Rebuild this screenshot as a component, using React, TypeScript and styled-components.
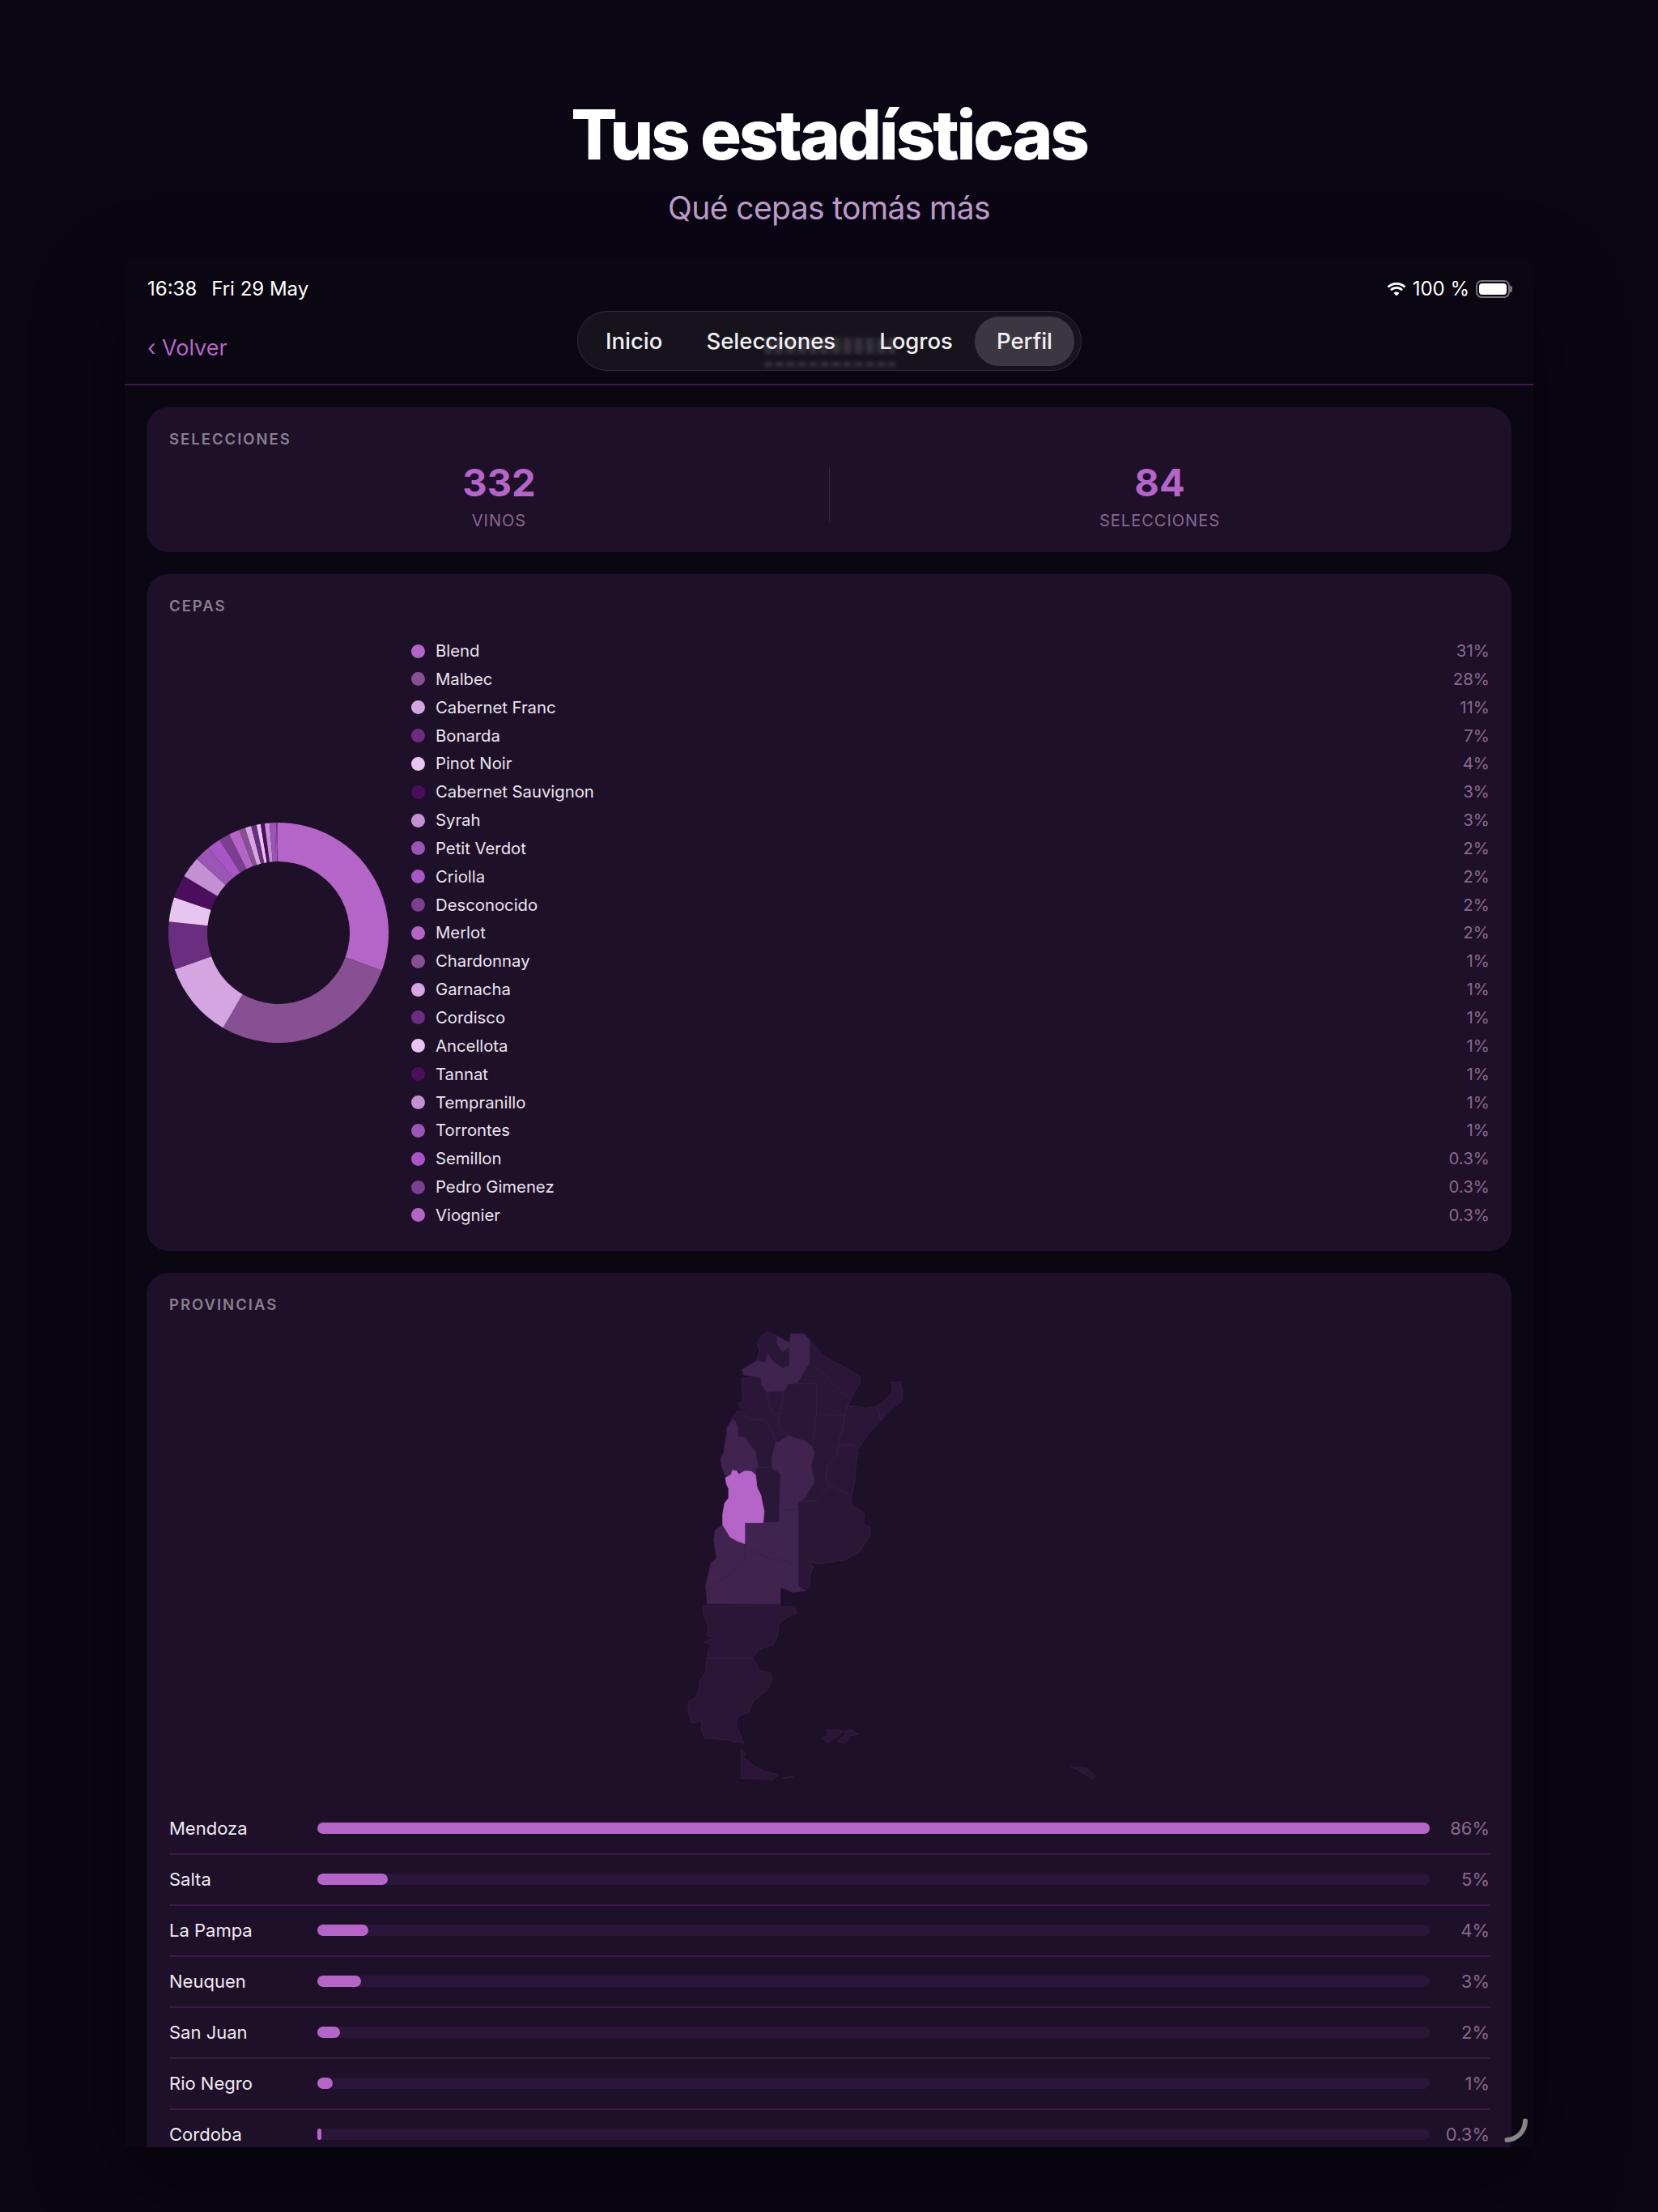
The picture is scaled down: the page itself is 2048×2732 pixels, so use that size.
import React from 'react';
import styled, { createGlobalStyle } from 'styled-components';

const ACCENT = '#b565c7';
const MAP_DARK = '#2a1637';
const MAP_LIGHT = '#40234f';

const GlobalStyle = createGlobalStyle`
  html, body {
    margin: 0;
    padding: 0;
    background: #0a0613;
    font-family: Inter, "Noto Sans", sans-serif;
  }
`;

const cepas = [
  { name: 'Blend', pct: '31%', share: 30.6, color: '#b565c7' },
  { name: 'Malbec', pct: '28%', share: 27.8, color: '#875092' },
  { name: 'Cabernet Franc', pct: '11%', share: 11.2, color: '#d4a5e0' },
  { name: 'Bonarda', pct: '7%', share: 7.0, color: '#6a2d80' },
  { name: 'Pinot Noir', pct: '4%', share: 3.6, color: '#e8c4f0' },
  { name: 'Cabernet Sauvignon', pct: '3%', share: 3.4, color: '#4a0e5c' },
  { name: 'Syrah', pct: '3%', share: 3.1, color: '#c490d4' },
  { name: 'Petit Verdot', pct: '2%', share: 2.3, color: '#9a55b5' },
  { name: 'Criolla', pct: '2%', share: 2.0, color: '#a855c7' },
  { name: 'Desconocido', pct: '2%', share: 1.6, color: '#7a3f8f' },
  { name: 'Merlot', pct: '2%', share: 1.6, color: '#b565c7' },
  { name: 'Chardonnay', pct: '1%', share: 0.9, color: '#875092' },
  { name: 'Garnacha', pct: '1%', share: 0.9, color: '#d4a5e0' },
  { name: 'Cordisco', pct: '1%', share: 0.8, color: '#6a2d80' },
  { name: 'Ancellota', pct: '1%', share: 0.6, color: '#e8c4f0' },
  { name: 'Tannat', pct: '1%', share: 0.6, color: '#4a0e5c' },
  { name: 'Tempranillo', pct: '1%', share: 0.7, color: '#c490d4' },
  { name: 'Torrontes', pct: '1%', share: 0.8, color: '#9a55b5' },
  { name: 'Semillon', pct: '0.3%', share: 0.2, color: '#a855c7' },
  { name: 'Pedro Gimenez', pct: '0.3%', share: 0.15, color: '#7a3f8f' },
  { name: 'Viognier', pct: '0.3%', share: 0.15, color: '#b565c7' },
];

const provincias = [
  { name: 'Mendoza', pct: '86%', fill: 100 },
  { name: 'Salta', pct: '5%', fill: 6.3 },
  { name: 'La Pampa', pct: '4%', fill: 4.55 },
  { name: 'Neuquen', pct: '3%', fill: 3.9 },
  { name: 'San Juan', pct: '2%', fill: 2.05 },
  { name: 'Rio Negro', pct: '1%', fill: 1.4 },
  { name: 'Cordoba', pct: '0.3%', fill: 0.35 },
];

// outlines traced from the reference, 3 units = 1px
const regions: { points: string; fill: string; stroke?: string }[] = [
  { fill: MAP_DARK, points: '385,42 420,60 420,90 440,120 465,100 465,170 440,180 405,155 385,125 375,160 345,150 355,110 345,90 360,60' },
  { fill: MAP_LIGHT, points: '420,60 465,85 470,52 520,52 540,75 540,165 495,235 460,240 445,265 415,265 380,268 360,240 360,215 295,205 290,185 345,150 375,160 385,125 405,155 440,180 465,170 465,100 440,120 420,90' },
  { fill: MAP_DARK, points: '540,75 590,130 630,155 670,175 725,210 730,230 710,260 695,295 640,250 600,205 540,160' },
  { fill: MAP_DARK, points: '540,160 600,205 640,250 695,295 680,320 670,355 565,352 565,235 495,235' },
  { fill: MAP_DARK, points: '460,238 565,235 565,352 550,470 525,450 460,428 430,450 440,420 425,380 430,345 450,265' },
  { fill: MAP_DARK, points: '385,268 415,265 445,265 430,345 410,350 390,320' },
  { fill: MAP_DARK, points: '290,215 360,215 360,240 380,268 390,320 410,350 430,345 425,380 440,420 415,455 400,410 370,368 320,372 290,340 275,310 295,300 290,270' },
  { fill: MAP_DARK, points: '248,370 270,340 290,340 320,372 370,368 400,410 415,455 400,510 402,545 350,550 340,490 300,435 275,430 275,400 262,372' },
  { fill: MAP_LIGHT, points: '248,375 262,372 275,400 275,432 300,435 340,490 350,550 345,575 330,565 300,570 280,565 265,555 250,565 245,580 225,575 215,545 210,515 222,490 225,460 232,430 232,405' },
  { fill: MAP_DARK, points: '340,548 400,548 432,570 428,750 368,752 372,710 365,680 360,650 345,620 340,575' },
  { fill: MAP_LIGHT, points: '400,510 415,455 430,450 460,428 525,450 550,470 560,495 545,540 560,600 515,670 498,675 498,705 428,705 432,570 400,548 402,545' },
  { fill: MAP_DARK, points: '565,352 670,355 665,400 650,440 640,500 605,545 600,590 620,615 595,632 565,672 520,670 560,600 545,540 560,495 550,470' },
  { fill: MAP_DARK, points: '645,470 680,460 705,470 720,490 710,550 708,600 695,655 620,615 600,590 605,545 640,500' },
  { fill: MAP_DARK, points: '680,320 725,322 750,328 790,320 805,372 760,420 720,480 705,465 680,460 645,470 650,440 665,400 670,355' },
  { fill: MAP_DARK, points: '790,320 830,290 848,265 845,232 875,230 885,265 885,300 850,325 805,372 795,340' },
  { fill: MAP_DARK, points: '498,675 565,672 595,632 620,615 695,655 695,680 745,720 740,760 765,768 765,800 725,860 670,890 570,905 538,895 555,915 540,950 545,985 525,1002 498,988' },
  { fill: MAP_LIGHT, points: '300,752 428,750 428,705 498,705 498,915 460,895 390,885 322,850 300,830' },
  { fill: MAP_LIGHT, points: '218,760 240,800 300,828 303,895 260,930 165,1000 155,985 165,940 175,900 195,885 185,820 190,780' },
  { fill: MAP_LIGHT, points: '303,895 303,830 322,850 390,885 460,895 498,915 498,988 525,1004 480,1010 432,992 432,1053 160,1053 155,985 165,1000 260,930' },
  { fill: MAP_DARK, points: '145,1060 432,1055 440,1065 485,1060 490,1090 465,1098 460,1100 425,1130 422,1170 405,1205 370,1215 350,1225 330,1253 160,1253 165,1220 175,1205 148,1195 185,1180 160,1170 165,1140 155,1110 145,1085' },
  { fill: MAP_DARK, points: '160,1255 330,1255 355,1300 400,1310 402,1340 385,1370 330,1415 315,1455 275,1470 268,1505 298,1570 240,1558 150,1550 138,1515 140,1487 105,1495 90,1460 90,1415 110,1405 130,1375 130,1340 155,1310 158,1265' },
  { fill: MAP_DARK, points: '286,1588 305,1610 295,1620 321,1645 375,1675 428,1685 405,1703 286,1700' },
  { fill: MAP_DARK, points: '441,1698 482,1690 470,1696' },
  { fill: MAP_DARK, points: '587,1550 610,1540 602,1520 653,1520 664,1527 610,1567' },
  { fill: MAP_DARK, points: '643,1560 670,1542 670,1525 696,1520 723,1535 691,1542 685,1555 664,1570' },
  { fill: MAP_DARK, points: '1508,1657 1566,1660 1600,1692 1587,1702 1534,1668' },
  { fill: ACCENT, stroke: ACCENT, points: '228,585 248,575 255,557 270,560 278,572 300,560 325,562 340,575 345,620 360,650 365,680 372,710 368,752 300,752 300,830 272,820 245,805 230,780 218,760 218,720 225,680 240,660 240,625 232,610' },
];

const polar = (pct: number, r: number) => {
  const a = (pct / 100) * 2 * Math.PI;
  return `${(136 + r * Math.sin(a)).toFixed(2)} ${(136 - r * Math.cos(a)).toFixed(2)}`;
};

const slicePath = (from: number, to: number) => {
  const large = to - from > 50 ? 1 : 0;
  return `M${polar(from, 136)} A136 136 0 ${large} 1 ${polar(to, 136)} L${polar(to, 88)} A88 88 0 ${large} 0 ${polar(from, 88)} Z`;
};

const Donut: React.FC = () => {
  let at = 0;
  return (
    <DonutSvg viewBox="0 0 272 272">
      {cepas.map(({ name, share, color }) => {
        const d = slicePath(at, at + share);
        at += share;
        return <path key={name} d={d} fill={color} />;
      })}
    </DonutSvg>
  );
};

const App: React.FC = () => (
  <Page>
    <GlobalStyle />
    <Header>
      <Title>Tus estadísticas</Title>
      <Subtitle>Qué cepas tomás más</Subtitle>
    </Header>
    <Screen>
      <StatusBar>
        <Clock>
          <span>16:38</span>
          <span>Fri 29 May</span>
        </Clock>
        <StatusRight>
          <svg width="24" height="17" viewBox="0 0 24 17">
            <path d="M12 16.5 8.6 12.9a4.8 4.8 0 0 1 6.8 0L12 16.5Z" fill="#fff" />
            <path d="M5.9 10.2 4 8.2a11.3 11.3 0 0 1 16 0l-1.9 2a8.6 8.6 0 0 0-12.2 0Z" fill="#fff" />
            <path d="M2.5 6.6.6 4.6a16.2 16.2 0 0 1 22.8 0l-1.9 2a13.5 13.5 0 0 0-19 0Z" fill="#fff" />
          </svg>
          <span>100 %</span>
          <Battery>
            <BatteryFill />
          </Battery>
        </StatusRight>
      </StatusBar>
      <NavBar>
        <BackLink>‹ Volver</BackLink>
        <TabPill>
          <GhostLine $top={32} $height={20} />
          <GhostLine $top={62} $height={6} />
          <Tab>Inicio</Tab>
          <Tab>Selecciones</Tab>
          <Tab>Logros</Tab>
          <Tab $active>Perfil</Tab>
        </TabPill>
        <span />
      </NavBar>
      <Content>
        <StatsCard>
          <CardLabel>SELECCIONES</CardLabel>
          <StatsGrid>
            <Stat>
              <StatValue>332</StatValue>
              <StatName>VINOS</StatName>
            </Stat>
            <StatDivider />
            <Stat>
              <StatValue>84</StatValue>
              <StatName>SELECCIONES</StatName>
            </Stat>
          </StatsGrid>
        </StatsCard>
        <Card>
          <CardLabel>CEPAS</CardLabel>
          <CepasBody>
            <Donut />
            <Legend>
              {cepas.map(({ name, pct, color }) => (
                <LegendRow key={name}>
                  <Dot $color={color} />
                  <LegendName>{name}</LegendName>
                  <Percent>{pct}</Percent>
                </LegendRow>
              ))}
            </Legend>
          </CepasBody>
        </Card>
        <Card>
          <CardLabel>PROVINCIAS</CardLabel>
          <MapSvg viewBox="-1833 0 4890 1770">
            {regions.map(({ points, fill, stroke }) => (
              <polygon key={points} points={points} fill={fill} stroke={stroke || '#3b2149'} strokeWidth="2" strokeLinejoin="round" />
            ))}
          </MapSvg>
          <ProvinceList>
            {provincias.map(({ name, pct, fill }) => (
              <ProvinceRow key={name}>
                <ProvinceName>{name}</ProvinceName>
                <Track>
                  <Fill style={{ width: `${fill}%` }} />
                </Track>
                <ProvincePercent>{pct}</ProvincePercent>
              </ProvinceRow>
            ))}
          </ProvinceList>
        </Card>
      </Content>
      <CornerArc width="30" height="32" viewBox="0 0 30 32">
        <path d="M26 3.5C26 16 16 26.5 3.5 27" fill="none" stroke="#858585" strokeWidth="6" strokeLinecap="round" />
      </CornerArc>
    </Screen>
  </Page>
);

export default App;

const Page = styled.div`
  width: 2048px;
  height: 2732px;
  overflow: hidden;
  background: #0a0613;
  color: #fff;
`;
const Header = styled.header`
  height: 320px;
  box-sizing: border-box;
  padding-top: 116px;
  display: flex;
  flex-direction: column;
  align-items: center;
`;
const Title = styled.h1`
  margin: 0;
  font-size: 85px;
  line-height: 102px;
  font-weight: 800;
  letter-spacing: -3.2px;
  color: #fff;
`;
const Subtitle = styled.p`
  margin: 14px 0 0;
  font-size: 39px;
  line-height: 50px;
  font-weight: 400;
  letter-spacing: -0.6px;
  color: #bf9bcc;
`;
const Screen = styled.main`
  position: relative;
  width: 1740px;
  height: 2332px;
  margin: 0 auto;
  overflow: hidden;
  background: #0a0612;
  box-shadow: 0 40px 100px rgba(0, 0, 0, 0.45);
`;
const StatusBar = styled.div`
  height: 52px;
  padding: 0 26px 0 28px;
  display: flex;
  align-items: flex-end;
  justify-content: space-between;
  font-size: 24px;
  font-weight: 400;
  line-height: 30px;
  color: #fff;
`;
const Clock = styled.div`
  display: flex;
  gap: 18px;
`;
const StatusRight = styled.div`
  display: flex;
  align-items: center;
  gap: 8px;
`;
const Battery = styled.div`
  position: relative;
  width: 42px;
  height: 22px;
  margin-right: 3px;
  box-sizing: border-box;
  border: 2px solid #77727c;
  border-radius: 7px;
  padding: 2px;
  &::after {
    content: '';
    position: absolute;
    right: -5px;
    top: 5px;
    width: 3px;
    height: 8px;
    border-radius: 0 2px 2px 0;
    background: #77727c;
  }
`;
const BatteryFill = styled.div`
  width: 100%;
  height: 100%;
  background: #fff;
  border-radius: 4px;
`;
const NavBar = styled.nav`
  height: 90px;
  padding: 12px 27px 0 28px;
  display: grid;
  grid-template-columns: 1fr auto 1fr;
  align-items: start;
  border-bottom: 2px solid #3b1c4a;
`;
const BackLink = styled.div`
  margin-top: 27px;
  font-size: 27px;
  line-height: 38px;
  font-weight: 400;
  color: ${ACCENT};
`;
const TabPill = styled.div`
  position: relative;
  display: flex;
  align-items: center;
  box-sizing: border-box;
  height: 74px;
  width: 623px;
  padding: 0 7px;
  overflow: hidden;
  border: 1.5px solid #322d3a;
  border-radius: 37px;
  background: #16131c;
`;
// what scrolls under the glass pill, too blurred to read
const GhostLine = styled.div<{ $top: number; $height: number }>`
  position: absolute;
  left: 230px;
  top: ${props => props.$top}px;
  width: 162px;
  height: ${props => props.$height}px;
  filter: blur(2px);
  background: repeating-linear-gradient(90deg, #35313b 0 9px, #1f1b25 9px 14px);
`;
const Tab = styled.div<{ $active?: boolean }>`
  position: relative;
  height: 61px;
  line-height: 61px;
  padding: 0 27px;
  border-radius: 30px;
  font-size: 27.5px;
  font-weight: 500;
  white-space: nowrap;
  color: #f1eff3;
  background: ${props => (props.$active ? '#3c3640' : 'transparent')};
`;
const Content = styled.div`
  padding: 27px;
  display: flex;
  flex-direction: column;
  gap: 27px;
`;
const Card = styled.section`
  background: #1e1029;
  border-radius: 27px;
  padding: 27px 27px 27px 28px;
`;
const StatsCard = styled(Card)`
  height: 179px;
  box-sizing: border-box;
`;
const CardLabel = styled.div`
  font-size: 18.5px;
  line-height: 24px;
  font-weight: 600;
  letter-spacing: 2px;
  color: #8a7f8f;
`;
const StatsGrid = styled.div`
  margin-top: 14px;
  display: grid;
  grid-template-columns: 1fr 1px 1fr;
`;
const Stat = styled.div`
  display: flex;
  flex-direction: column;
  align-items: center;
`;
const StatValue = styled.div`
  font-size: 47px;
  line-height: 56px;
  font-weight: 700;
  color: ${ACCENT};
`;
const StatName = styled.div`
  margin-top: 6px;
  font-size: 20px;
  line-height: 26px;
  letter-spacing: 1px;
  color: #86698f;
`;
const StatDivider = styled.div`
  height: 67px;
  margin-top: 9px;
  background: #3a2747;
`;
const CepasBody = styled.div`
  margin-top: 31px;
  padding-bottom: 4px;
  display: flex;
  align-items: center;
  gap: 28px;
`;
const DonutSvg = styled.svg`
  width: 272px;
  height: 272px;
  margin-left: -1px;
  flex: none;
`;
const Legend = styled.div`
  flex: 1;
  display: flex;
  flex-direction: column;
  gap: 8.85px;
`;
const LegendRow = styled.div`
  height: 26px;
  display: flex;
  align-items: center;
  gap: 13px;
`;
const Dot = styled.i<{ $color: string }>`
  width: 17px;
  height: 17px;
  border-radius: 50%;
  background: ${props => props.$color};
`;
const LegendName = styled.span`
  flex: 1;
  font-size: 20.3px;
  line-height: 26px;
  color: #ece4ef;
`;
const Percent = styled.span`
  font-size: 20.5px;
  line-height: 26px;
  color: #86698f;
`;
const MapSvg = styled.svg`
  display: block;
  width: 1630px;
  height: 590px;
  margin-top: 7px;
`;
const ProvinceList = styled.div`
  margin-top: 8px;
`;
const ProvinceRow = styled.div`
  height: 61px;
  display: flex;
  align-items: center;
  border-bottom: 2px solid #381a45;
  &:last-child {
    border-bottom: 0;
  }
`;
const ProvinceName = styled.span`
  width: 183px;
  flex: none;
  font-size: 22px;
  font-weight: 400;
  color: #f0eaf2;
`;
const Track = styled.div`
  flex: 1;
  height: 14px;
  border-radius: 7px;
  background: #2a1638;
`;
const Fill = styled.div`
  height: 100%;
  min-width: 5px;
  border-radius: 7px;
  background: ${ACCENT};
`;
const ProvincePercent = styled.span`
  width: 74px;
  flex: none;
  text-align: right;
  font-size: 22px;
  color: #86698f;
`;
const CornerArc = styled.svg`
  position: absolute;
  right: 6px;
  bottom: 4px;
`;
